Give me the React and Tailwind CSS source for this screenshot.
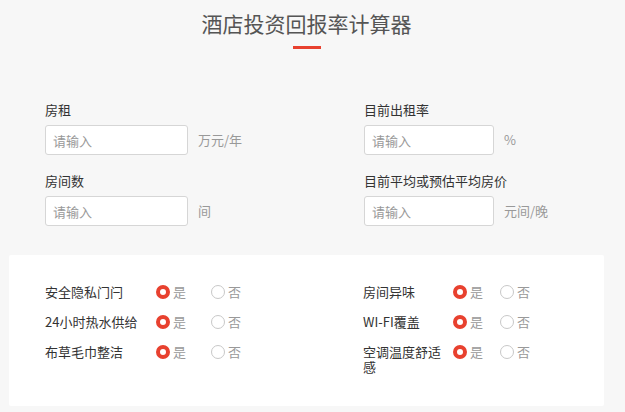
import React, { useState } from 'react';

const fields = [
  { label: '房租', unit: '万元/年', width: 'w-[143px]' },
  { label: '目前出租率', unit: '%', width: 'w-[130px]' },
  { label: '房间数', unit: '间', width: 'w-[143px]' },
  { label: '目前平均或预估平均房价', unit: '元间/晚', width: 'w-[130px]' },
];

const checks = [
  { key: 'lock', label: '安全隐私门闩', side: 'left' },
  { key: 'smell', label: '房间异味', side: 'right' },
  { key: 'water', label: '24小时热水供给', side: 'left' },
  { key: 'wifi', label: 'WI-FI覆盖', side: 'right' },
  { key: 'linen', label: '布草毛巾整洁', side: 'left' },
  { key: 'air', label: '空调温度舒适感', side: 'right' },
];

// red filled ring when picked, grey outline otherwise
const Radio = ({ checked }) => (
  <span
    className={
      checked
        ? 'box-border block w-[14px] h-[14px] rounded-full border-[4.5px] border-[#e8412f] bg-white'
        : 'box-border block w-[14px] h-[14px] rounded-full border border-[#c8c8c8] bg-white'
    }
  />
);

const CheckRow = ({ item, value, onChange }) => {
  const left = item.side === 'left';
  return (
    <div className="flex items-start">
      <div className={`${left ? 'w-[111px]' : 'w-[90px]'} text-[13px] leading-[15px] text-[#333]`}>
        {item.label}
      </div>
      <button
        type="button"
        onClick={() => onChange(true)}
        className={`${left ? 'w-[55px]' : 'w-[47px]'} flex items-center h-[15px] gap-[3px] cursor-pointer`}
      >
        <Radio checked={value} />
        <span className="text-[13px] leading-[15px] text-[#999]">是</span>
      </button>
      <button
        type="button"
        onClick={() => onChange(false)}
        className="flex items-center h-[15px] gap-[3px] cursor-pointer"
      >
        <Radio checked={!value} />
        <span className="text-[13px] leading-[15px] text-[#999]">否</span>
      </button>
    </div>
  );
};

const App = () => {
  const [answers, setAnswers] = useState({
    lock: true,
    smell: true,
    water: true,
    wifi: true,
    linen: true,
    air: true,
  });

  return (
    <div
      className="min-h-screen bg-[#f7f7f7] pt-[11px] pb-[6px]"
      style={{ fontFamily: '"Noto Sans CJK SC", "Noto Sans", sans-serif' }}
    >
      {/* Title */}
      <div className="w-[613px]">
        <h1 className="text-center text-[21px] leading-[24px] font-normal text-[#555]">
          酒店投资回报率计算器
        </h1>
        <div className="mx-auto mt-[11px] w-[28px] h-[3px] bg-[#e8412f]" />
      </div>

      {/* Inputs */}
      <div className="mt-[52px] pl-[45px] grid grid-cols-[319px_1fr] gap-y-[17px]">
        {fields.map((f) => (
          <div key={f.label}>
            <div className="text-[13px] leading-[17px] text-[#333] mb-[7px]">{f.label}</div>
            <div className="flex items-center">
              <input
                placeholder="请输入"
                className={`${f.width} h-[30px] box-border border border-[#d6d6d6] rounded-[3px] bg-white px-[7px] text-[13px] text-[#333] placeholder:text-[#999] outline-none`}
              />
              <span className="ml-[10px] text-[13px] text-[#999]">{f.unit}</span>
            </div>
          </div>
        ))}
      </div>

      {/* Facility checks */}
      <div className="mt-[29px] mx-[9px] w-[595px] h-[151px] bg-white rounded-[2px] pt-[29px] pl-[36px]">
        <div className="grid grid-cols-[318px_1fr] gap-y-[15px]">
          {checks.map((c) => (
            <CheckRow
              key={c.key}
              item={c}
              value={answers[c.key]}
              onChange={(v) => setAnswers({ ...answers, [c.key]: v })}
            />
          ))}
        </div>
      </div>
    </div>
  );
};

export default App;
